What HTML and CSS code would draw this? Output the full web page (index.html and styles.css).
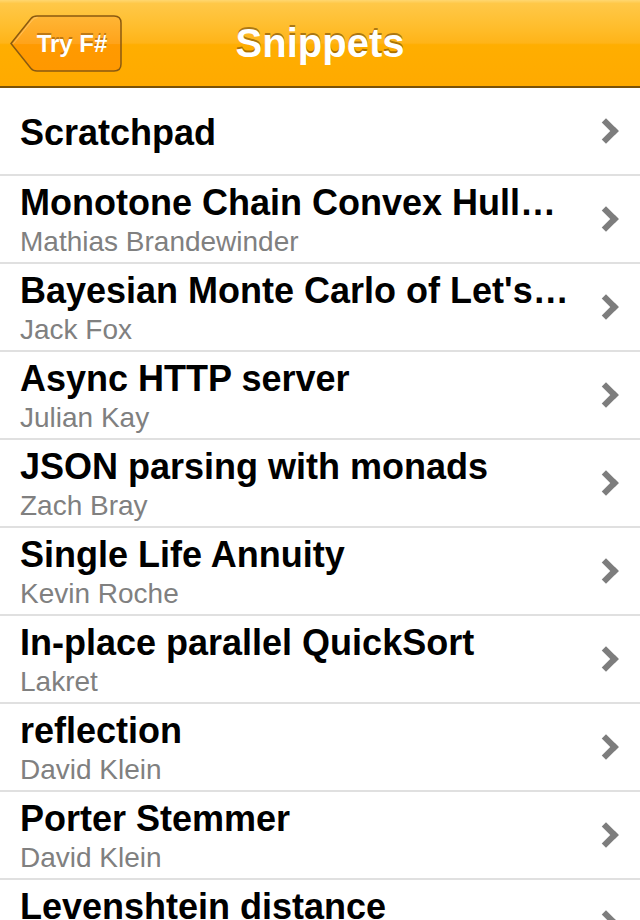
FILE: index.html
```html
<!DOCTYPE html>
<html>
<head>
<meta charset="utf-8">
<link rel="stylesheet" href="styles.css">
</head>
<body>
<header class="navbar">
  <a class="back">
    <svg class="back-bg" viewBox="0 0 112 57" width="112" height="57">
      <defs>
        <linearGradient id="bg" x1="0" y1="0" x2="0" y2="1">
          <stop offset="0" stop-color="#ffb636"/>
          <stop offset="0.5" stop-color="#ffa31a"/>
          <stop offset="0.52" stop-color="#ff9a00"/>
          <stop offset="1" stop-color="#ff9800"/>
        </linearGradient>
      </defs>
      <path d="M1 28.5 L21 3.5 Q23 1 27 1 L104 1 Q111 1 111 8 L111 49 Q111 56 104 56 L27 56 Q23 56 21 53.5 Z" fill="url(#bg)" stroke="#8a5a10" stroke-width="1.5"/>
      <path d="M3.5 28.5 L22.5 4.8 Q24 2.6 27.5 2.6" fill="none" stroke="rgba(255,255,255,0.25)" stroke-width="1"/>
    </svg>
    <span class="back-label">Try F#</span>
  </a>
  <h1 class="title">Snippets</h1>
</header>
<ul class="list">
  <li class="row single"><div class="text"><div class="name">Scratchpad</div></div><span class="chev"></span></li>
  <li class="row"><div class="text"><div class="name">Monotone Chain Convex Hull…</div><div class="author">Mathias Brandewinder</div></div><span class="chev"></span></li>
  <li class="row"><div class="text"><div class="name">Bayesian Monte Carlo of Let's…</div><div class="author">Jack Fox</div></div><span class="chev"></span></li>
  <li class="row"><div class="text"><div class="name">Async HTTP server</div><div class="author">Julian Kay</div></div><span class="chev"></span></li>
  <li class="row"><div class="text"><div class="name">JSON parsing with monads</div><div class="author">Zach Bray</div></div><span class="chev"></span></li>
  <li class="row"><div class="text"><div class="name">Single Life Annuity</div><div class="author">Kevin Roche</div></div><span class="chev"></span></li>
  <li class="row"><div class="text"><div class="name">In-place parallel QuickSort</div><div class="author">Lakret</div></div><span class="chev"></span></li>
  <li class="row"><div class="text"><div class="name">reflection</div><div class="author">David Klein</div></div><span class="chev"></span></li>
  <li class="row"><div class="text"><div class="name">Porter Stemmer</div><div class="author">David Klein</div></div><span class="chev"></span></li>
  <li class="row"><div class="text"><div class="name">Levenshtein distance</div><div class="author">David Klein</div></div><span class="chev"></span></li>
</ul>
</body>
</html>
```
FILE: styles.css
```css
html, body {
  margin: 0;
  padding: 0;
}
body {
  width: 640px;
  height: 920px;
  overflow: hidden;
  background: #fff;
  font-family: "Liberation Sans", Arial, sans-serif;
}
.navbar {
  position: relative;
  height: 86px;
  border-bottom: 2px solid #7a5208;
  background: linear-gradient(to bottom, #ffd770 0%, #ffc848 4%, #ffbe2e 30%, #ffb418 50%, #ffae00 52%, #ffaa00 100%);
  display: flex;
  align-items: center;
  justify-content: center;
}
.back {
  position: absolute;
  left: 10px;
  top: 15px;
  width: 112px;
  height: 57px;
  display: flex;
  align-items: center;
  justify-content: center;
}
.back-bg {
  position: absolute;
  left: 0;
  top: 0;
}
.back-label {
  position: relative;
  margin-left: 12px;
  color: #fff;
  font-weight: bold;
  font-size: 24px;
  text-shadow: 0 -2px 0 rgba(110, 60, 0, 0.45);
}
.title {
  margin: 0;
  color: #fff;
  font-size: 40px;
  font-weight: bold;
  text-shadow: 0 -2px 0 rgba(100, 60, 0, 0.55);
}
.list {
  list-style: none;
  margin: 0;
  padding: 0;
}
.row {
  height: 86px;
  border-bottom: 2px solid #e0e0e0;
  display: flex;
  align-items: center;
  padding: 0 20px;
}
.text {
  flex: 1;
  min-width: 0;
  display: flex;
  flex-direction: column;
  padding-top: 4px;
}
.name {
  font-size: 36px;
  font-weight: bold;
  color: #000;
  line-height: 40px;
  white-space: nowrap;
}
.author {
  font-size: 28px;
  color: #808080;
  line-height: 36px;
  margin-top: 1px;
  white-space: nowrap;
}
.chev {
  width: 12px;
  height: 12px;
  border-top: 6px solid #7d7d7d;
  border-right: 6px solid #7d7d7d;
  transform: rotate(45deg);
  margin-right: 5px;
  flex: none;
}
```
